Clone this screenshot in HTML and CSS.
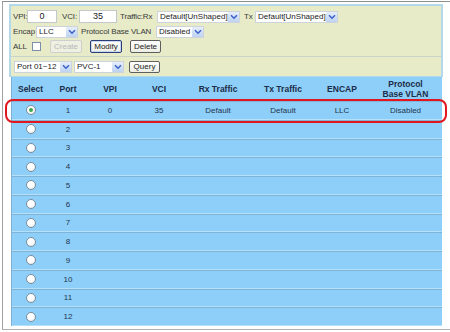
FILE: index.html
```html
<!DOCTYPE html>
<html>
<head>
<meta charset="utf-8">
<link rel="stylesheet" href="styles.css">
</head>
<body>
<div class="frame">
  <div class="panel">
    <div class="form">
      <div class="row">
        <span class="lbl l-vpi">VPI:</span><span class="inp w-vpi">0</span>
        <span class="lbl l-vci">VCI:</span><span class="inp w-vci">35</span>
        <span class="lbl l-rx">Traffic:Rx</span>
        <span class="sel w-rx"><span class="val">Default[UnShaped]</span><span class="arr"><svg width="8" height="6" viewBox="0 0 8 6"><path d="M1 1.2 L4 4.2 L7 1.2" fill="none" stroke="#3d63c9" stroke-width="1.6"/></svg></span></span>
        <span class="lbl l-tx">Tx</span>
        <span class="sel w-tx"><span class="val">Default[UnShaped]</span><span class="arr"><svg width="8" height="6" viewBox="0 0 8 6"><path d="M1 1.2 L4 4.2 L7 1.2" fill="none" stroke="#3d63c9" stroke-width="1.6"/></svg></span></span>
      </div>
      <div class="row">
        <span class="lbl l-encap">Encap</span>
        <span class="sel w-llc"><span class="val">LLC</span><span class="arr"><svg width="8" height="6" viewBox="0 0 8 6"><path d="M1 1.2 L4 4.2 L7 1.2" fill="none" stroke="#3d63c9" stroke-width="1.6"/></svg></span></span>
        <span class="lbl l-pbv">Protocol Base VLAN</span>
        <span class="sel w-dis"><span class="val">Disabled</span><span class="arr"><svg width="8" height="6" viewBox="0 0 8 6"><path d="M1 1.2 L4 4.2 L7 1.2" fill="none" stroke="#3d63c9" stroke-width="1.6"/></svg></span></span>
      </div>
      <div class="row">
        <span class="lbl l-all">ALL</span><span class="chk"></span>
        <span class="btn btn-off b-create">Create</span>
        <span class="btn btn-focus b-modify">Modify</span>
        <span class="btn b-delete">Delete</span>
      </div>
    </div>
    <div class="query">
      <span class="sel w-port"><span class="val">Port 01~12</span><span class="arr"><svg width="8" height="6" viewBox="0 0 8 6"><path d="M1 1.2 L4 4.2 L7 1.2" fill="none" stroke="#3d63c9" stroke-width="1.6"/></svg></span></span>
      <span class="sel w-pvc"><span class="val">PVC-1</span><span class="arr"><svg width="8" height="6" viewBox="0 0 8 6"><path d="M1 1.2 L4 4.2 L7 1.2" fill="none" stroke="#3d63c9" stroke-width="1.6"/></svg></span></span>
      <span class="btn b-query">Query</span>
    </div>
  </div>

  <div class="table">
    <div class="tr head">
      <span>Select</span><span>Port</span><span>VPI</span><span>VCI</span><span>Rx Traffic</span><span>Tx Traffic</span><span>ENCAP</span><span>Protocol<br>Base VLAN</span>
    </div>
    <div class="tr"><span><i class="radio on"></i></span><span>1</span><span>0</span><span>35</span><span>Default</span><span>Default</span><span>LLC</span><span>Disabled</span></div>
    <div class="tr"><span><i class="radio"></i></span><span>2</span><span></span><span></span><span></span><span></span><span></span><span></span></div>
    <div class="tr"><span><i class="radio"></i></span><span>3</span><span></span><span></span><span></span><span></span><span></span><span></span></div>
    <div class="tr"><span><i class="radio"></i></span><span>4</span><span></span><span></span><span></span><span></span><span></span><span></span></div>
    <div class="tr"><span><i class="radio"></i></span><span>5</span><span></span><span></span><span></span><span></span><span></span><span></span></div>
    <div class="tr"><span><i class="radio"></i></span><span>6</span><span></span><span></span><span></span><span></span><span></span><span></span></div>
    <div class="tr"><span><i class="radio"></i></span><span>7</span><span></span><span></span><span></span><span></span><span></span><span></span></div>
    <div class="tr"><span><i class="radio"></i></span><span>8</span><span></span><span></span><span></span><span></span><span></span><span></span></div>
    <div class="tr"><span><i class="radio"></i></span><span>9</span><span></span><span></span><span></span><span></span><span></span><span></span></div>
    <div class="tr"><span><i class="radio"></i></span><span>10</span><span></span><span></span><span></span><span></span><span></span><span></span></div>
    <div class="tr"><span><i class="radio"></i></span><span>11</span><span></span><span></span><span></span><span></span><span></span><span></span></div>
    <div class="tr"><span><i class="radio"></i></span><span>12</span><span></span><span></span><span></span><span></span><span></span><span></span></div>
    <div class="highlight"></div>
  </div>
</div>
</body>
</html>
```

FILE: styles.css
```css
* { box-sizing: border-box; }
body {
  margin: 0;
  background: #fff;
  font-family: "Liberation Sans", Arial, sans-serif;
}
.frame {
  margin: 1px 0 0 2px;
  width: 448px;
  height: 329px;
  border-top: 1px solid #8e8e8e;
  border-left: 1px solid #a2a2a2;
  border-bottom: 1px solid #b0b0b0;
  padding: 2px 0 0 6px;
}
.panel {
  width: 434px;
  background: #e7ebc7;
  border: 2px solid #b2d8ea;
  border-bottom-width: 1px;
}
.form {
  height: 50px;
  padding: 3px 0 2px 2px;
  display: flex;
  flex-direction: column;
}
.row {
  height: 15px;
  display: flex;
  align-items: center;
}
.lbl {
  font-size: 8px;
  color: #3a3a3a;
  white-space: nowrap;
  letter-spacing: -0.15px;
}
.l-vpi { width: 14px; }
.l-vci { width: 17px; margin-left: 5px; }
.l-rx { width: 37px; margin-left: 3px; }
.l-tx { width: 11px; margin-left: 4px; }
.l-encap { width: 23px; }
.l-pbv { width: 75px; margin-left: 3px; }
.l-all { width: 19px; }

.inp {
  height: 13px;
  background: #fff;
  border: 1px solid #c3c8cd;
  font-size: 9px;
  color: #222;
  text-align: center;
  line-height: 11px;
}
.w-vpi { width: 30px; }
.w-vci { width: 38px; }

.sel {
  display: flex;
  align-items: center;
  height: 12px;
  background: #fff;
  border: 1px solid #cdd3da;
}
.val {
  flex: 1;
  padding-left: 2px;
  font-size: 8px;
  color: #222;
  white-space: nowrap;
  overflow: hidden;
}
.arr {
  width: 11px;
  height: 10px;
  background: linear-gradient(#e6eefb, #bed2f0);
  border-radius: 1px;
  display: flex;
  align-items: center;
  justify-content: center;
}
.w-rx { width: 83px; }
.w-tx { width: 83px; }
.w-llc { width: 42px; }
.w-dis { width: 48px; }
.w-port { width: 58px; }
.w-pvc { width: 50px; margin-left: 2px; }

.chk {
  width: 9px;
  height: 9px;
  background: #fff;
  border: 1px solid #7d8fa8;
}
.btn {
  display: flex;
  align-items: center;
  justify-content: center;
  height: 13px;
  font-size: 8px;
  color: #222;
  background: linear-gradient(#ffffff, #eceee4);
  border: 1px solid #5e5e5e;
  border-radius: 2px;
}
.btn-off {
  color: #b8b8b8;
  border-color: #cfcfcf;
  background: #eef0e2;
}
.btn-focus {
  border-color: #2c3c78;
  box-shadow: inset 0 0 0 1px #c9d6f0;
}
.b-create { width: 32px; margin-left: 9px; }
.b-modify { width: 32px; margin-left: 8px; }
.b-delete { width: 31px; margin-left: 8px; }
.b-query { width: 31px; margin-left: 5px; height: 12px; }

.query {
  height: 20px;
  border-top: 1px solid #c9d3c6;
  padding-left: 3px;
  display: flex;
  align-items: center;
}

.table {
  position: relative;
  margin-left: 2px;
  width: 431px;
  border-left: 1px solid #7fb2d2;
}
.tr {
  display: grid;
  grid-template-columns: 37px 38px 46px 52px 66px 64px 54px 73px;
  height: 18.75px;
  background: #8dcff8;
  border-top: 1px solid #80b4d6;
  border-bottom: 1px solid #b6e0f8;
  font-size: 8px;
  color: #25354f;
}
.tr span {
  display: flex;
  align-items: center;
  justify-content: center;
  text-align: center;
}
.tr.head {
  height: 24px;
  border-top: none;
  font-weight: bold;
  font-size: 8.5px;
  color: #1c2b47;
  line-height: 10px;
}
.radio {
  display: block;
  width: 10px;
  height: 10px;
  border-radius: 50%;
  border: 1px solid #7f8e9c;
  background: radial-gradient(circle at 40% 35%, #ffffff 40%, #dde4ea 100%);
  position: relative;
}
.radio.on::after {
  content: "";
  position: absolute;
  left: 2px;
  top: 2px;
  width: 4px;
  height: 4px;
  border-radius: 50%;
  background: #3da64c;
}
.highlight {
  position: absolute;
  left: -7px;
  top: 22px;
  width: 442px;
  height: 24px;
  border: 2px solid #e2161e;
  border-radius: 8px;
}
```
